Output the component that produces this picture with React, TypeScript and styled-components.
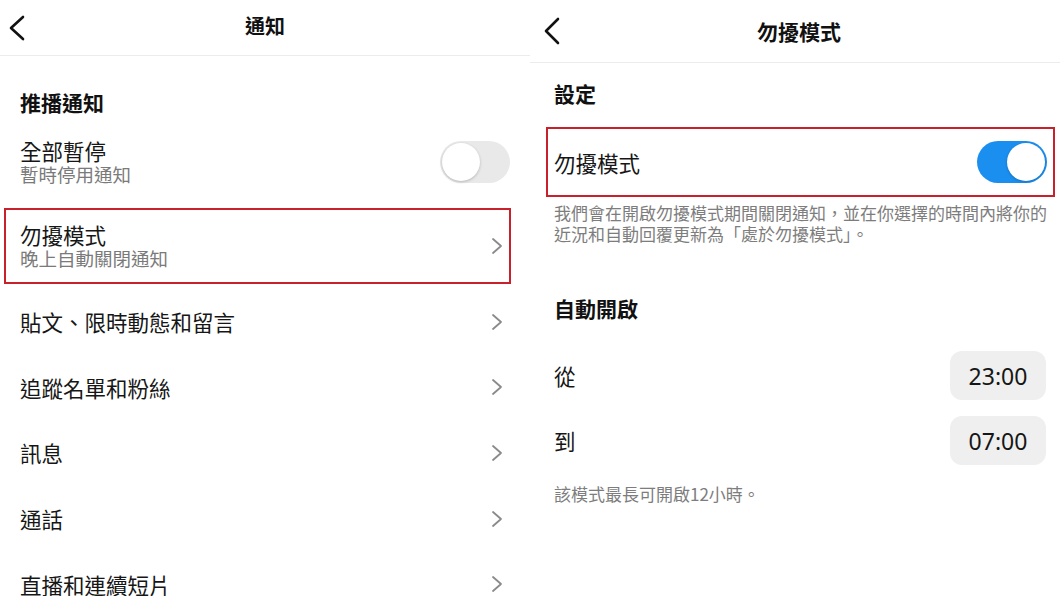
import React from "react";
import styled, { createGlobalStyle } from "styled-components";

const GlobalStyle = createGlobalStyle`
  html, body {
    margin: 0;
    padding: 0;
    background: #fff;
  }
  body {
    font-family: "Noto Sans CJK TC", "Noto Sans", sans-serif;
    color: #111;
  }
`;

const Screen = styled.div`
  display: flex;
  align-items: flex-start;
  width: 1060px;
  height: 596px;
  overflow: hidden;
  background: #fff;
`;

const Panel = styled.div`
  width: 530px;
  flex-shrink: 0;
  display: flex;
  flex-direction: column;

  & > * {
    flex-shrink: 0;
  }
`;

const Header = styled.div<{ h: number }>`
  position: relative;
  height: ${(p) => p.h}px;
  display: flex;
  align-items: center;
  justify-content: center;
  border-bottom: 1px solid #ececec;
`;

const BackButton = styled.div<{ left: number }>`
  position: absolute;
  left: ${(p) => p.left}px;
  top: 0;
  bottom: 0;
  display: flex;
  align-items: center;
`;

const HeaderTitle = styled.div<{ size: number }>`
  font-size: ${(p) => p.size}px;
  font-weight: 700;
  line-height: 26px;
  color: #111;
`;

const Body = styled.div<{ pad: number }>`
  display: flex;
  flex-direction: column;
  padding: 0 0 0 ${(p) => p.pad}px;
`;

const SectionTitle = styled.div<{ top: number }>`
  margin-top: ${(p) => p.top}px;
  font-size: 21px;
  font-weight: 700;
  line-height: 26px;
  color: #111;
`;

const Row = styled.div<{ h: number }>`
  display: flex;
  align-items: center;
  justify-content: space-between;
  height: ${(p) => p.h}px;
  padding-right: 27px;
`;

const Highlight = styled.div<{ h: number; ml: number; mr: number; pl: number; pr: number; mt: number }>`
  display: flex;
  align-items: center;
  justify-content: space-between;
  box-sizing: border-box;
  height: ${(p) => p.h}px;
  margin: ${(p) => p.mt}px ${(p) => p.mr}px 0 ${(p) => p.ml}px;
  padding: 0 ${(p) => p.pr}px 0 ${(p) => p.pl}px;
  border: 2px solid #c9212b;
`;

const Texts = styled.div`
  display: flex;
  flex-direction: column;
  gap: 2px;
`;

const Title = styled.div`
  font-size: 21.5px;
  line-height: 23px;
  color: #161616;
`;

const Sub = styled.div`
  font-size: 18.5px;
  line-height: 21px;
  color: #7a7a7a;
`;

const Note = styled.div<{ top: number }>`
  margin-top: ${(p) => p.top}px;
  padding-right: 8px;
  font-size: 17px;
  line-height: 21px;
  color: #7d7d7d;
`;

const Track = styled.div<{ on: boolean }>`
  position: relative;
  width: 70px;
  height: 42px;
  border-radius: 21px;
  background: ${(p) => (p.on ? "#1b8ff0" : "#e9e9e9")};
  flex-shrink: 0;
`;

const Knob = styled.div<{ on: boolean }>`
  position: absolute;
  top: 2px;
  left: ${(p) => (p.on ? "30px" : "2px")};
  width: 38px;
  height: 38px;
  border-radius: 50%;
  background: #fff;
  box-shadow: 0 1px 3px rgba(0, 0, 0, 0.22);
`;

const TimeRow = styled.div`
  display: flex;
  align-items: center;
  justify-content: space-between;
  height: 65px;
  padding-right: 14px;
`;

const TimePill = styled.div`
  width: 96px;
  height: 49px;
  border-radius: 12px;
  background: #efefef;
  display: flex;
  align-items: center;
  justify-content: center;
  font-size: 23px;
  color: #161616;
  font-family: "Noto Sans", "Noto Sans CJK TC", sans-serif;
`;

function BackIcon({ h }: { h: number }) {
  return (
    <svg width={18} height={h} viewBox={`0 0 18 ${h}`} fill="none">
      <path
        d={`M15 2 L3 ${h / 2} L15 ${h - 2}`}
        stroke="#111"
        strokeWidth={2.6}
        strokeLinecap="round"
        strokeLinejoin="round"
      />
    </svg>
  );
}

function Chevron() {
  return (
    <svg width={12} height={18} viewBox="0 0 12 18" fill="none">
      <path d="M2 2 L10 9 L2 16" stroke="#8a8a8a" strokeWidth={1.8} strokeLinecap="round" strokeLinejoin="round" />
    </svg>
  );
}

function Toggle({ on }: { on: boolean }) {
  return (
    <Track on={on}>
      <Knob on={on} />
    </Track>
  );
}

const links = ["貼文、限時動態和留言", "追蹤名單和粉絲", "訊息", "通話", "直播和連續短片"];

function NotificationsPanel() {
  return (
    <Panel>
      <Header h={55}>
        <BackButton left={8}>
          <BackIcon h={26} />
        </BackButton>
        <HeaderTitle size={20} style={{ marginTop: -3 }}>
          通知
        </HeaderTitle>
      </Header>
      <Body pad={20}>
        <SectionTitle top={33}>推播通知</SectionTitle>
        <Row h={68} style={{ marginTop: 13, paddingRight: 20 }}>
          <Texts>
            <Title>全部暫停</Title>
            <Sub>暫時停用通知</Sub>
          </Texts>
          <Toggle on={false} />
        </Row>
      </Body>
      <Highlight h={76} mt={12} ml={4} mr={19} pl={14} pr={6}>
        <Texts>
          <Title>勿擾模式</Title>
          <Sub>晚上自動關閉通知</Sub>
        </Texts>
        <Chevron />
      </Highlight>
      <Body pad={20} style={{ marginTop: 5 }}>
        {links.map((label) => (
          <Row key={label} h={65.6}>
            <Title>{label}</Title>
            <Chevron />
          </Row>
        ))}
      </Body>
    </Panel>
  );
}

function QuietModePanel() {
  return (
    <Panel>
      <Header h={62}>
        <BackButton left={13}>
          <BackIcon h={28} />
        </BackButton>
        <HeaderTitle size={21} style={{ marginLeft: 8 }}>
          勿擾模式
        </HeaderTitle>
      </Header>
      <Body pad={24}>
        <SectionTitle top={17}>設定</SectionTitle>
      </Body>
      <Highlight h={70} mt={21} ml={16} mr={5} pl={6} pr={6}>
        <Title>勿擾模式</Title>
        <Toggle on={true} />
      </Highlight>
      <Body pad={24}>
        <Note top={5}>
          我們會在開啟勿擾模式期間關閉通知，並在你選擇的時間內將你的近況和自動回覆更新為「處於勿擾模式」。
        </Note>
        <SectionTitle top={51}>自動開啟</SectionTitle>
        <TimeRow style={{ marginTop: 22 }}>
          <Title>從</Title>
          <TimePill>23:00</TimePill>
        </TimeRow>
        <TimeRow>
          <Title>到</Title>
          <TimePill>07:00</TimePill>
        </TimeRow>
        <Note top={10}>該模式最長可開啟12小時。</Note>
      </Body>
    </Panel>
  );
}

export default function App() {
  return (
    <>
      <GlobalStyle />
      <Screen>
        <NotificationsPanel />
        <QuietModePanel />
      </Screen>
    </>
  );
}
